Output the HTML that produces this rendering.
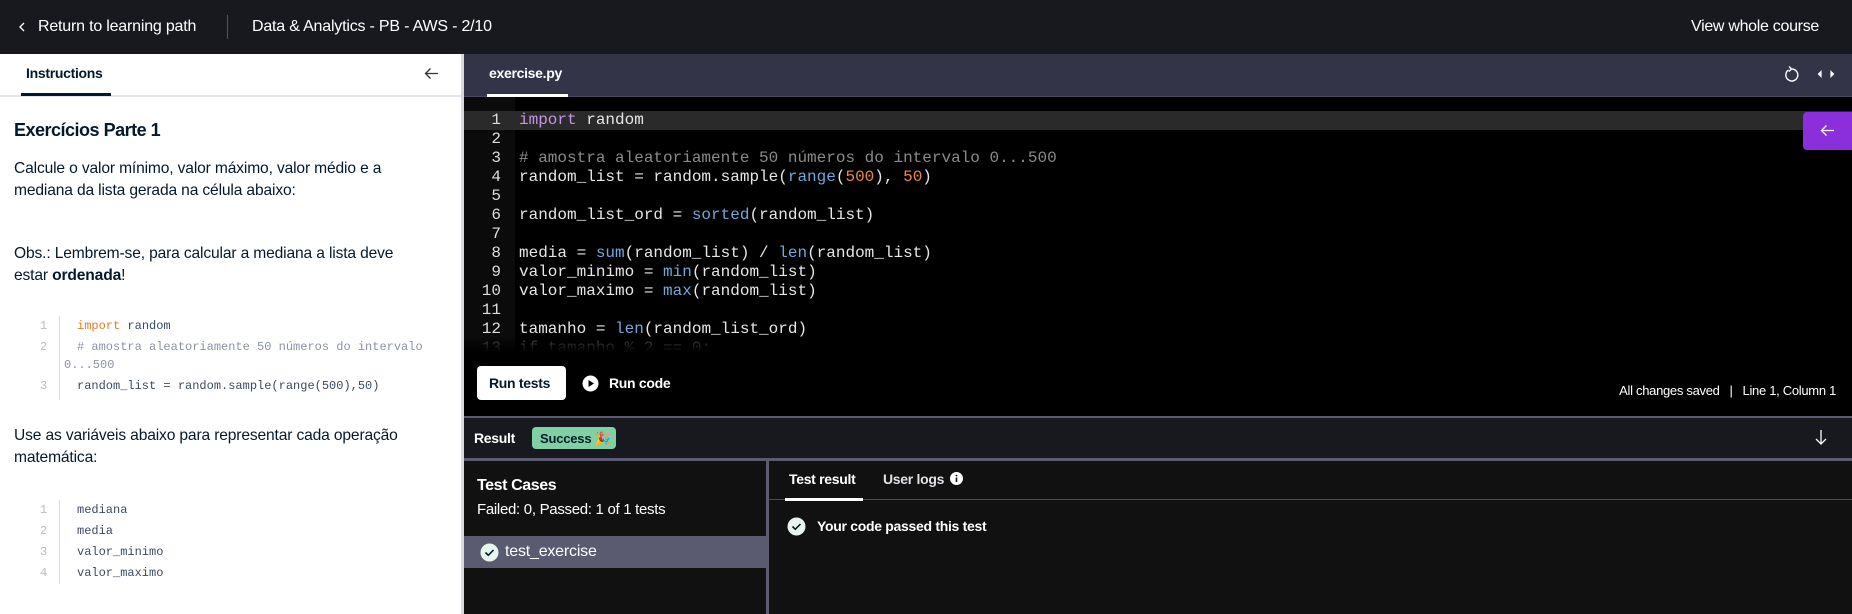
<!DOCTYPE html>
<html><head><meta charset="utf-8"><style>
*{box-sizing:border-box;margin:0;padding:0}
body{width:1852px;height:614px;overflow:hidden;background:#111;font-family:"Liberation Sans","Noto Sans CJK JP",sans-serif;position:relative}
.a{position:absolute;white-space:nowrap}
.mono{font-family:"Liberation Mono",monospace}
</style></head><body>
<!-- top bar -->
<div class="a" style="left:0;top:0;width:1852px;height:54px;background:#18191f"></div>
<svg class="a" style="left:18px;top:22px" width="8" height="10" viewBox="0 0 8 10"><path d="M6 1 L2 5 L6 9" stroke="#fff" stroke-width="1.4" fill="none"/></svg>
<div class="a" style="left:38px;top:18px;color:#fff;font-size:16px;letter-spacing:-0.2px">Return to learning path</div>
<div class="a" style="left:227px;top:15px;width:1px;height:24px;background:#555"></div>
<div class="a" style="left:252px;top:18px;color:#fff;font-size:16px;letter-spacing:-0.2px">Data &amp; Analytics - PB - AWS - 2/10</div>
<div class="a" style="right:33px;top:18px;color:#fff;font-size:16px;letter-spacing:-0.3px">View whole course</div>

<!-- left panel -->
<div class="a" style="left:0;top:54px;width:461px;height:560px;background:#fff"></div>
<div class="a" style="left:0;top:95px;width:461px;height:2px;background:#e2e2ea"></div>
<div class="a" style="left:26px;top:65px;font-size:14px;font-weight:bold;color:#05192d;letter-spacing:-0.3px">Instructions</div>
<div class="a" style="left:21px;top:93px;width:90px;height:3px;background:#05192d"></div>
<svg class="a" style="left:424px;top:67px" width="15" height="13" viewBox="0 0 15 13"><path d="M14 6.5 H2 M6.5 1.5 L1.5 6.5 L6.5 11.5" stroke="#333" stroke-width="1.3" fill="none"/></svg>
<div class="a" style="left:14px;top:120px;font-size:18px;font-weight:bold;color:#05192d;letter-spacing:-0.5px">Exercícios Parte 1</div>
<div class="a" style="left:14px;top:158px;font-size:15.6px;line-height:22px;color:#05192d;letter-spacing:-0.15px">Calcule o valor mínimo, valor máximo, valor médio e a<br>mediana da lista gerada na célula abaixo:</div>
<div class="a" style="left:14px;top:243px;font-size:15.6px;line-height:22px;color:#05192d;letter-spacing:-0.15px">Obs.: Lembrem-se, para calcular a mediana a lista deve<br>estar <b>ordenada</b>!</div>
<div class="a mono" style="left:0;top:316px;font-size:12px;color:#3b4a63;line-height:21px">
<div style="position:absolute;left:40px;top:0;color:#bbb">1</div><div style="position:absolute;left:59px;top:0;width:1px;height:84px;background:#ddd"></div>
<div style="position:absolute;left:77px;top:0"><span style="color:#e07b25">import</span> random</div>
<div style="position:absolute;left:40px;top:21px;color:#bbb">2</div>
<div style="position:absolute;left:77px;top:21px;color:#8a93a6"># amostra aleatoriamente 50 números do intervalo</div>
<div style="position:absolute;left:64px;top:39px;color:#8a93a6">0...500</div>
<div style="position:absolute;left:40px;top:60px;color:#bbb">3</div>
<div style="position:absolute;left:77px;top:60px">random_list = random.sample(range(500),50)</div>
</div>
<div class="a" style="left:14px;top:425px;font-size:15.6px;line-height:22px;color:#05192d;letter-spacing:-0.15px">Use as variáveis abaixo para representar cada operação<br>matemática:</div>
<div class="a mono" style="left:0;top:500px;font-size:12px;color:#3b4a63;line-height:21px">
<div style="position:absolute;left:59px;top:0;width:1px;height:84px;background:#ddd"></div>
<div style="position:absolute;left:40px;top:0;color:#bbb">1<br>2<br>3<br>4</div>
<div style="position:absolute;left:77px;top:0">mediana<br>media<br>valor_minimo<br>valor_maximo</div>
</div>
<div class="a" style="left:461px;top:54px;width:3px;height:560px;background:#d8d8de"></div>

<!-- editor -->
<div class="a" style="left:464px;top:54px;width:1388px;height:43px;background:#343449;border-bottom:1px solid #4a4b60"></div>
<div class="a" style="left:489px;top:65px;color:#fff;font-size:14px;font-weight:bold;letter-spacing:-0.3px">exercise.py</div>
<div class="a" style="left:487px;top:94px;width:81px;height:3px;background:#fff"></div>
<svg class="a" style="left:1783px;top:65px" width="16" height="18" viewBox="0 0 16 18"><path d="M5.5 5 A6 6 0 1 0 9 4 M6 1.5 L8.5 4 L6 6.5" stroke="#fff" stroke-width="1.4" fill="none"/></svg>
<svg class="a" style="left:1817px;top:69px" width="18" height="10" viewBox="0 0 18 10"><path d="M4 2.5 L1.5 5 L4 7.5 Z M14 2.5 L16.5 5 L14 7.5 Z" stroke="#fff" stroke-width="1.2" fill="#fff"/></svg>
<div class="a" style="left:464px;top:97px;width:1388px;height:319px;background:#000"></div>
<div class="a" style="left:464px;top:97px;width:51px;height:255px;background:#0b0b0b"></div>
<div class="a" style="left:464px;top:111px;width:1388px;height:19px;background:#2a2a2a"></div>
<div class="a mono" style="left:464px;top:111px;width:1340px;height:241px;overflow:hidden;font-size:16px;line-height:19px;color:#e6e6e6">
<div style="position:absolute;left:0;top:0;width:37px;text-align:right;color:#ddd">1<br>2<br>3<br>4<br>5<br>6<br>7<br>8<br>9<br>10<br>11<br>12<br><span style="color:#555">13</span></div>
<div style="position:absolute;left:55px;top:0">
<span style="color:#c792ea">import</span> random<br><br>
<span style="color:#8a8a8a"># amostra aleatoriamente 50 números do intervalo 0...500</span><br>
random_list = random.sample(<span style="color:#6fa8dc">range</span>(<span style="color:#f0883e">500</span>), <span style="color:#f0883e">50</span>)<br><br>
random_list_ord = <span style="color:#6fa8dc">sorted</span>(random_list)<br><br>
media = <span style="color:#6fa8dc">sum</span>(random_list) / <span style="color:#6fa8dc">len</span>(random_list)<br>
valor_minimo = <span style="color:#6fa8dc">min</span>(random_list)<br>
valor_maximo = <span style="color:#6fa8dc">max</span>(random_list)<br><br>
tamanho = <span style="color:#6fa8dc">len</span>(random_list_ord)<br>
<span style="color:#555">if tamanho % 2 == 0:</span>
</div></div>
<div class="a" style="left:464px;top:336px;width:1340px;height:16px;background:linear-gradient(rgba(0,0,0,0),#000)"></div>
<div class="a" style="left:1803px;top:112px;width:49px;height:38px;background:#8b2fdc;border-radius:4px 0 0 4px"></div>
<svg class="a" style="left:1820px;top:124px" width="15" height="13" viewBox="0 0 15 13"><path d="M14 6.5 H2 M6.5 1.5 L1.5 6.5 L6.5 11.5" stroke="#fff" stroke-width="1.3" fill="none"/></svg>
<div class="a" style="left:477px;top:366px;width:89px;height:34px;background:#fff;border-radius:4px"></div>
<div class="a" style="left:489px;top:375px;font-size:14px;font-weight:bold;color:#05192d;letter-spacing:-0.3px">Run tests</div>
<svg class="a" style="left:582px;top:375px" width="17" height="17" viewBox="0 0 17 17"><circle cx="8.5" cy="8.5" r="8" fill="#fff"/><path d="M6.5 5 L12 8.5 L6.5 12Z" fill="#000"/></svg>
<div class="a" style="left:609px;top:375px;font-size:14px;font-weight:bold;color:#fff;letter-spacing:-0.3px">Run code</div>
<div class="a" style="right:16px;top:383px;font-size:13px;color:#fff;letter-spacing:-0.3px">All changes saved &nbsp;&nbsp;|&nbsp;&nbsp; Line 1, Column 1</div>

<!-- result -->
<div class="a" style="left:464px;top:416px;width:1388px;height:45px;background:#18191f;border-top:2px solid #5a5b70;border-bottom:3px solid #5a5b70"></div>
<div class="a" style="left:474px;top:430px;font-size:14px;font-weight:bold;color:#fff;letter-spacing:-0.3px">Result</div>
<div class="a" style="left:532px;top:427px;width:84px;height:22px;background:#7fd1a3;border-radius:4px;font-size:13px;font-weight:bold;color:#05192d;padding:4px 0 0 8px;letter-spacing:-0.2px">Success 🎉</div>
<svg class="a" style="left:1815px;top:429px" width="12" height="16" viewBox="0 0 12 16"><path d="M6 1 V15 M1 10 L6 15 L11 10" stroke="#fff" stroke-width="1.3" fill="none"/></svg>
<div class="a" style="left:766px;top:461px;width:3px;height:153px;background:#5a5b70"></div>
<div class="a" style="left:477px;top:477px;font-size:16px;font-weight:bold;color:#fff;letter-spacing:-0.4px">Test Cases</div>
<div class="a" style="left:477px;top:501px;font-size:15px;color:#fff;letter-spacing:-0.3px">Failed: 0, Passed: 1 of 1 tests</div>
<div class="a" style="left:464px;top:536px;width:302px;height:32px;background:#5a5b70"></div>
<svg class="a" style="left:480px;top:543px" width="19" height="19" viewBox="0 0 19 19"><circle cx="9.5" cy="9.5" r="9" fill="#e8f5ee"/><path d="M5.5 9.5 L8.3 12.3 L13.5 7" stroke="#05192d" stroke-width="1.6" fill="none"/></svg>
<div class="a" style="left:505px;top:543px;font-size:16px;color:#fff;letter-spacing:-0.2px">test_exercise</div>
<div class="a" style="left:769px;top:499px;width:1083px;height:1px;background:#4a4b5a"></div>
<div class="a" style="left:789px;top:471px;font-size:14px;font-weight:bold;color:#fff;letter-spacing:-0.3px">Test result</div>
<div class="a" style="left:785px;top:498px;width:78px;height:3px;background:#fff"></div>
<div class="a" style="left:883px;top:471px;font-size:14px;font-weight:bold;color:#e0e0e6;letter-spacing:-0.3px">User logs</div>
<svg class="a" style="left:950px;top:472px" width="13" height="13" viewBox="0 0 13 13"><circle cx="6.5" cy="6.5" r="6.5" fill="#fff"/><rect x="5.7" y="5.5" width="1.6" height="4.5" fill="#111"/><circle cx="6.5" cy="3.6" r="0.9" fill="#111"/></svg>
<svg class="a" style="left:787px;top:517px" width="19" height="19" viewBox="0 0 19 19"><circle cx="9.5" cy="9.5" r="9" fill="#e8f5ee"/><path d="M5.5 9.5 L8.3 12.3 L13.5 7" stroke="#05192d" stroke-width="1.6" fill="none"/></svg>
<div class="a" style="left:817px;top:518px;font-size:14px;font-weight:bold;color:#fff;letter-spacing:-0.3px">Your code passed this test</div>
</body></html>
